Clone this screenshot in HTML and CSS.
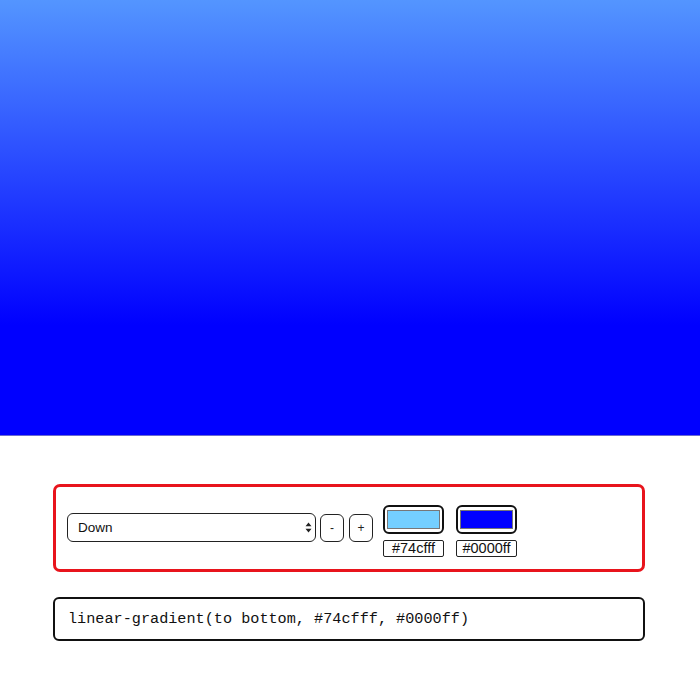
FILE: index.html
```html
<!DOCTYPE html>
<html>
<head>
<meta charset="utf-8">
<link rel="stylesheet" href="styles.css">
</head>
<body>
<div class="preview"></div>
<div class="panel">
  <div class="select-wrap">
    <select class="dir">
      <option>Down</option>
      <option>Up</option>
      <option>Left</option>
      <option>Right</option>
    </select>
    <svg class="arrows" width="7" height="11" viewBox="0 0 7 11"><path d="M3.5 0.5 L6.5 4.2 H0.5 Z M3.5 10.5 L6.5 6.8 H0.5 Z" fill="#222"/></svg>
  </div>
  <button class="step">-</button>
  <button class="step">+</button>
  <div class="stop">
    <div class="swatch"><div class="chip chip-a"></div></div>
    <div class="hex">#74cfff</div>
  </div>
  <div class="stop">
    <div class="swatch"><div class="chip chip-b"></div></div>
    <div class="hex">#0000ff</div>
  </div>
</div>
<div class="code">linear-gradient(to bottom, #74cfff, #0000ff)</div>
</body>
</html>
```
FILE: styles.css
```css
html, body {
  margin: 0;
  padding: 0;
  background: #fff;
  font-family: "Liberation Sans", Arial, sans-serif;
}
.preview {
  height: 435px;
  background: linear-gradient(to bottom, #74cfff -126px, #0000ff 325px, #0000ff 100%);
  border-bottom: 1px solid #6a6ad0;
}
.panel {
  box-sizing: border-box;
  width: 592px;
  height: 88px;
  margin: 48px 0 0 53px;
  border: 3px solid #e8141c;
  border-radius: 7px;
  display: flex;
  align-items: flex-start;
  padding: 18px 0 0 11px;
}
.select-wrap {
  position: relative;
  margin-top: 8px;
}
.dir {
  appearance: none;
  -webkit-appearance: none;
  box-sizing: border-box;
  width: 249px;
  height: 29px;
  border: 1px solid #222;
  border-radius: 6px;
  background: #fff;
  font-family: "Liberation Sans", Arial, sans-serif;
  font-size: 13.5px;
  color: #111;
  padding: 0 0 0 10px;
  margin: 0;
  display: block;
}
.arrows {
  position: absolute;
  right: 4px;
  top: 9px;
}
.step {
  box-sizing: border-box;
  width: 24px;
  height: 28px;
  margin: 9px 0 0 4px;
  padding: 0;
  border: 1px solid #222;
  border-radius: 6px;
  background: #fff;
  font-family: "Liberation Sans", Arial, sans-serif;
  font-size: 12px;
  color: #222;
}
.step + .step {
  margin-left: 5px;
}
.stop {
  display: flex;
  flex-direction: column;
  align-items: stretch;
  width: 61px;
  margin-left: 10px;
}
.stop + .stop {
  margin-left: 12px;
}
.swatch {
  box-sizing: border-box;
  height: 29px;
  border: 2px solid #111;
  border-radius: 6px;
  background: #fff;
  padding: 3px 2px;
}
.chip {
  height: 100%;
  box-sizing: border-box;
  border: 1px solid #777;
}
.chip-a { background: #74cfff; }
.chip-b { background: #0000ff; }
.hex {
  box-sizing: border-box;
  height: 17px;
  margin-top: 6px;
  border: 1px solid #222;
  border-radius: 2px;
  font-size: 14.5px;
  line-height: 15px;
  text-align: center;
  color: #111;
}
.code {
  box-sizing: border-box;
  width: 592px;
  height: 44px;
  margin: 25px 0 0 53px;
  border: 2px solid #111;
  border-radius: 6px;
  padding: 0 0 0 13px;
  display: flex;
  align-items: center;
  font-family: "Liberation Mono", "Courier New", monospace;
  font-size: 15.2px;
  color: #111;
}
```
